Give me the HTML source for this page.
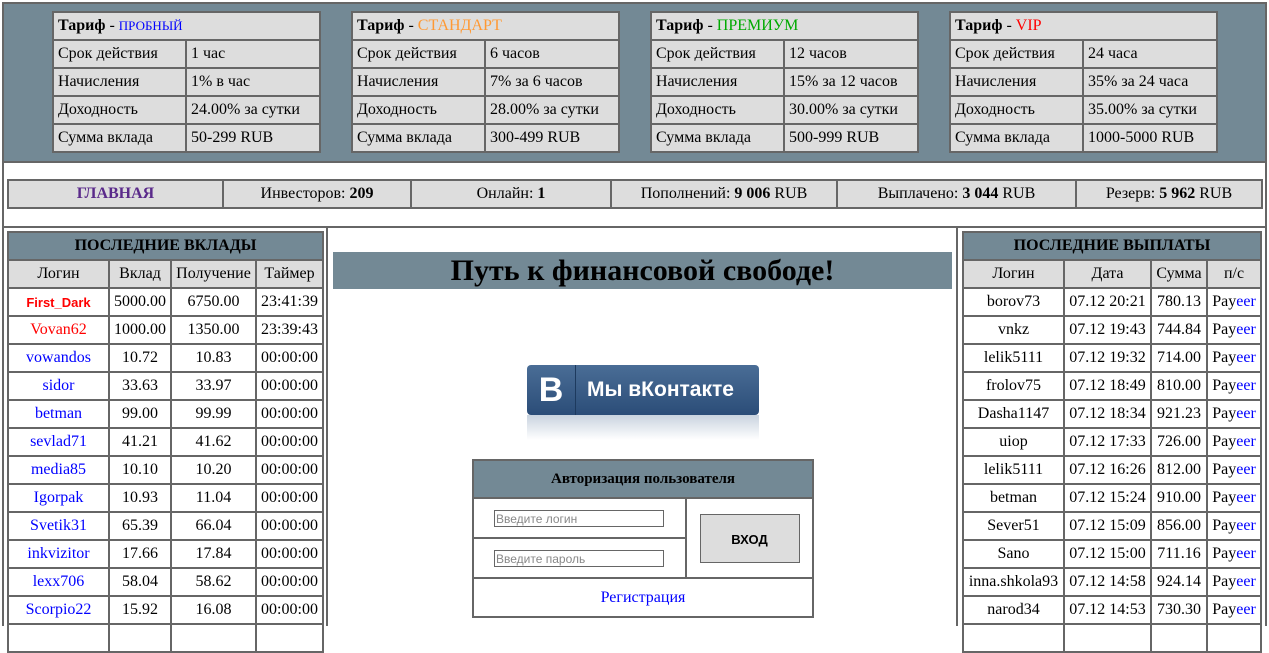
<!DOCTYPE html>
<html><head><meta charset="utf-8"><style>
body{margin:0;width:1269px;height:626px;overflow:hidden;background:#fff;font-family:"Liberation Serif",serif;font-size:16px;color:#000;position:relative}
.a{position:absolute;box-sizing:border-box}
table{border-collapse:collapse;table-layout:fixed;position:absolute}
td{border:2px solid #666;padding:0 4px;height:26px;white-space:nowrap;overflow:hidden}
.g td{background:#ddd}
.c td{text-align:center}
.h td{background:#738995;font-weight:bold;font-size:16px;text-align:center}
.b{color:#00f}.r{color:#f00}
</style></head><body>
<div class="a" style="left:2px;top:2px;width:1265px;height:161px;background:#738995;border:2px solid #666"></div>
<div class="a" style="left:2px;top:161px;width:1265px;height:67px;border:2px solid #666;border-top:none"></div>
<div class="a" style="left:2px;top:226px;width:2px;height:400px;background:#666"></div>
<div class="a" style="left:326px;top:226px;width:2px;height:400px;background:#666"></div>
<div class="a" style="left:956px;top:226px;width:2px;height:400px;background:#666"></div>
<div class="a" style="left:1265px;top:226px;width:2px;height:400px;background:#666"></div>

<table class="g" style="left:52px;top:11px;width:269px">
<col style="width:133px"><col>
<tr><td colspan="2"><b>Тариф</b> - <span class="b" style="font-size:13px">ПРОБНЫЙ</span></td></tr>
<tr><td>Срок действия</td><td>1 час</td></tr>
<tr><td>Начисления</td><td>1% в час</td></tr>
<tr><td>Доходность</td><td>24.00% за сутки</td></tr>
<tr><td>Сумма вклада</td><td>50-299 RUB</td></tr></table>
<table class="g" style="left:351px;top:11px;width:269px">
<col style="width:133px"><col>
<tr><td colspan="2"><b>Тариф</b> - <span style="color:#f93">СТАНДАРТ</span></td></tr>
<tr><td>Срок действия</td><td>6 часов</td></tr>
<tr><td>Начисления</td><td>7% за 6 часов</td></tr>
<tr><td>Доходность</td><td>28.00% за сутки</td></tr>
<tr><td>Сумма вклада</td><td>300-499 RUB</td></tr></table>
<table class="g" style="left:650px;top:11px;width:269px">
<col style="width:133px"><col>
<tr><td colspan="2"><b>Тариф</b> - <span style="color:#0a0">ПРЕМИУМ</span></td></tr>
<tr><td>Срок действия</td><td>12 часов</td></tr>
<tr><td>Начисления</td><td>15% за 12 часов</td></tr>
<tr><td>Доходность</td><td>30.00% за сутки</td></tr>
<tr><td>Сумма вклада</td><td>500-999 RUB</td></tr></table>
<table class="g" style="left:949px;top:11px;width:269px">
<col style="width:133px"><col>
<tr><td colspan="2"><b>Тариф</b> - <span class="r">VIP</span></td></tr>
<tr><td>Срок действия</td><td>24 часа</td></tr>
<tr><td>Начисления</td><td>35% за 24 часа</td></tr>
<tr><td>Доходность</td><td>35.00% за сутки</td></tr>
<tr><td>Сумма вклада</td><td>1000-5000 RUB</td></tr></table>

<table class="g c" style="left:7px;top:179px;width:1256px">
<col style="width:215px"><col style="width:188px"><col style="width:200px"><col style="width:226px"><col style="width:239px"><col>
<tr><td style="color:#5a2a8a;font-weight:bold">ГЛАВНАЯ</td><td>Инвесторов: <b>209</b></td><td>Онлайн: <b>1</b></td><td>Пополнений: <b>9 006</b> RUB</td><td>Выплачено: <b>3 044</b> RUB</td><td>Резерв: <b>5 962</b> RUB</td></tr></table>

<table class="c" style="left:7px;top:231px;width:317px">
<col style="width:101px"><col style="width:62px"><col style="width:85px"><col>
<tr class="h"><td colspan="4">ПОСЛЕДНИЕ ВКЛАДЫ</td></tr>
<tr class="g"><td>Логин</td><td>Вклад</td><td>Получение</td><td>Таймер</td></tr>
<tr><td class="r" style="font-family:'Liberation Sans',sans-serif;font-weight:bold;font-size:13px">First_Dark</td><td>5000.00</td><td>6750.00</td><td>23:41:39</td></tr>
<tr><td class="r">Vovan62</td><td>1000.00</td><td>1350.00</td><td>23:39:43</td></tr>
<tr><td class="b">vowandos</td><td>10.72</td><td>10.83</td><td>00:00:00</td></tr>
<tr><td class="b">sidor</td><td>33.63</td><td>33.97</td><td>00:00:00</td></tr>
<tr><td class="b">betman</td><td>99.00</td><td>99.99</td><td>00:00:00</td></tr>
<tr><td class="b">sevlad71</td><td>41.21</td><td>41.62</td><td>00:00:00</td></tr>
<tr><td class="b">media85</td><td>10.10</td><td>10.20</td><td>00:00:00</td></tr>
<tr><td class="b">Igorpak</td><td>10.93</td><td>11.04</td><td>00:00:00</td></tr>
<tr><td class="b">Svetik31</td><td>65.39</td><td>66.04</td><td>00:00:00</td></tr>
<tr><td class="b">inkvizitor</td><td>17.66</td><td>17.84</td><td>00:00:00</td></tr>
<tr><td class="b">lexx706</td><td>58.04</td><td>58.62</td><td>00:00:00</td></tr>
<tr><td class="b">Scorpio22</td><td>15.92</td><td>16.08</td><td>00:00:00</td></tr>
<tr><td></td><td></td><td></td><td></td></tr></table>

<div class="a" style="left:333px;top:252px;width:619px;height:37px;background:#738995;text-align:center;font-weight:bold;font-size:30px;line-height:37px">Путь к финансовой свободе!</div>

<div class="a" style="left:527px;top:365px;width:232px;height:50px;border-radius:4px;background:linear-gradient(#4a6d96,#2b4d78);color:#fff;font-family:'Liberation Sans',sans-serif;font-weight:bold">
<div class="a" style="left:0;top:0;width:49px;height:50px;border-right:1px solid #1d3a5e;font-size:34px;text-align:center;line-height:50px">B</div>
<div class="a" style="left:60px;top:0;font-size:21px;line-height:50px">Мы вКонтакте</div></div>
<div class="a" style="left:527px;top:415px;width:232px;height:25px;background:linear-gradient(#c9d3df,#fff)"></div>

<table style="left:472px;top:459px;width:342px">
<col style="width:213px"><col>
<tr class="h"><td colspan="2" style="height:36px;font-size:15px">Авторизация пользователя</td></tr>
<tr><td style="height:38px;padding-left:20px"><div style="width:170px;height:17px;border:1px solid #666;font-family:'Liberation Sans',sans-serif;font-size:12px;color:#888;line-height:17px;box-sizing:border-box;padding-left:1px">Введите логин</div></td>
<td rowspan="2" style="text-align:center"><div style="margin:auto;width:100px;height:49px;border:1px solid #666;background:#ddd;font-family:'Liberation Sans',sans-serif;font-weight:bold;font-size:13px;line-height:49px;box-sizing:border-box">ВХОД</div></td></tr>
<tr><td style="height:38px;padding-left:20px"><div style="width:170px;height:17px;border:1px solid #666;font-family:'Liberation Sans',sans-serif;font-size:12px;color:#888;line-height:17px;box-sizing:border-box;padding-left:1px">Введите пароль</div></td></tr>
<tr><td colspan="2" class="b" style="height:37px;text-align:center">Регистрация</td></tr></table>

<table class="c" style="left:962px;top:231px;width:300px">
<col style="width:101px"><col style="width:87px"><col style="width:56px"><col>
<tr class="h"><td colspan="4">ПОСЛЕДНИЕ ВЫПЛАТЫ</td></tr>
<tr class="g"><td>Логин</td><td>Дата</td><td>Сумма</td><td>п/с</td></tr>
<tr><td>borov73</td><td>07.12 20:21</td><td>780.13</td><td>Pay<span class="b">eer</span></td></tr>
<tr><td>vnkz</td><td>07.12 19:43</td><td>744.84</td><td>Pay<span class="b">eer</span></td></tr>
<tr><td>lelik5111</td><td>07.12 19:32</td><td>714.00</td><td>Pay<span class="b">eer</span></td></tr>
<tr><td>frolov75</td><td>07.12 18:49</td><td>810.00</td><td>Pay<span class="b">eer</span></td></tr>
<tr><td>Dasha1147</td><td>07.12 18:34</td><td>921.23</td><td>Pay<span class="b">eer</span></td></tr>
<tr><td>uiop</td><td>07.12 17:33</td><td>726.00</td><td>Pay<span class="b">eer</span></td></tr>
<tr><td>lelik5111</td><td>07.12 16:26</td><td>812.00</td><td>Pay<span class="b">eer</span></td></tr>
<tr><td>betman</td><td>07.12 15:24</td><td>910.00</td><td>Pay<span class="b">eer</span></td></tr>
<tr><td>Sever51</td><td>07.12 15:09</td><td>856.00</td><td>Pay<span class="b">eer</span></td></tr>
<tr><td>Sano</td><td>07.12 15:00</td><td>711.16</td><td>Pay<span class="b">eer</span></td></tr>
<tr><td style="padding:0">inna.shkola93</td><td>07.12 14:58</td><td>924.14</td><td>Pay<span class="b">eer</span></td></tr>
<tr><td>narod34</td><td>07.12 14:53</td><td>730.30</td><td>Pay<span class="b">eer</span></td></tr>
<tr><td></td><td></td><td></td><td></td></tr></table>
</body></html>
